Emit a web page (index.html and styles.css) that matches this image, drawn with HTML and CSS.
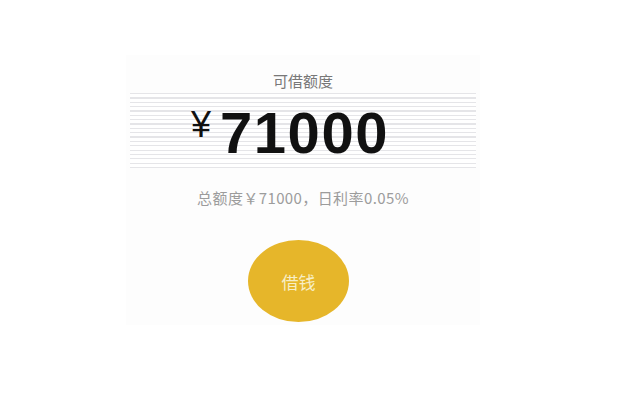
FILE: index.html
```html
<!DOCTYPE html>
<html lang="zh">
<head>
<meta charset="utf-8">
<title>可借额度</title>
<link rel="stylesheet" href="styles.css">
</head>
<body>
<div class="page">
  <div class="panel">
    <div class="title">可借额度</div>
    <div class="amount-box">
      <div class="amount">
        <span class="yen">¥</span>
        <span class="num">71000</span>
      </div>
    </div>
    <div class="info">总额度￥71000，日利率0.05%</div>
    <div class="btn">借钱</div>
  </div>
</div>
</body>
</html>
```
FILE: styles.css
```css
html, body {
  margin: 0;
  padding: 0;
  background: #ffffff;
}
.page {
  width: 640px;
  height: 400px;
  padding-top: 55px;
  box-sizing: border-box;
}
.panel {
  margin-left: 126px;
  width: 354px;
  height: 270px;
  box-sizing: border-box;
  padding-top: 18px;
  background: #fdfdfd;
  display: flex;
  flex-direction: column;
  align-items: center;
  font-family: "Noto Sans CJK SC", "Noto Sans", sans-serif;
}
.title {
  font-size: 15px;
  line-height: 16px;
  color: #787878;
}
.amount-box {
  margin-top: 4px;
  width: 346px;
  height: 75px;
  box-sizing: border-box;
  padding: 11px 26px 0 0;
  background: repeating-linear-gradient(to bottom, #e5e5e8 0, #e5e5e8 1.2px, #ffffff 1.2px, #ffffff 4.35px);
  display: flex;
  justify-content: center;
}
.amount {
  display: flex;
  align-items: flex-start;
  gap: 9px;
  font-family: "Liberation Sans", Arial, sans-serif;
  font-weight: bold;
  color: #111111;
}
.yen {
  font-size: 36px;
  line-height: 36px;
  margin-top: 3px;
  font-weight: normal;
}
.num {
  font-size: 58px;
  line-height: 58px;
  letter-spacing: 1.5px;
}
.info {
  margin-top: 20px;
  font-size: 15px;
  line-height: 20px;
  letter-spacing: 0.4px;
  color: #9c9c9c;
}
.btn {
  margin-top: 32px;
  margin-right: 9px;
  width: 101px;
  height: 82px;
  border-radius: 50%;
  background: #e6b62a;
  color: #f7eec6;
  font-size: 17px;
  display: flex;
  align-items: center;
  justify-content: center;
}
```
